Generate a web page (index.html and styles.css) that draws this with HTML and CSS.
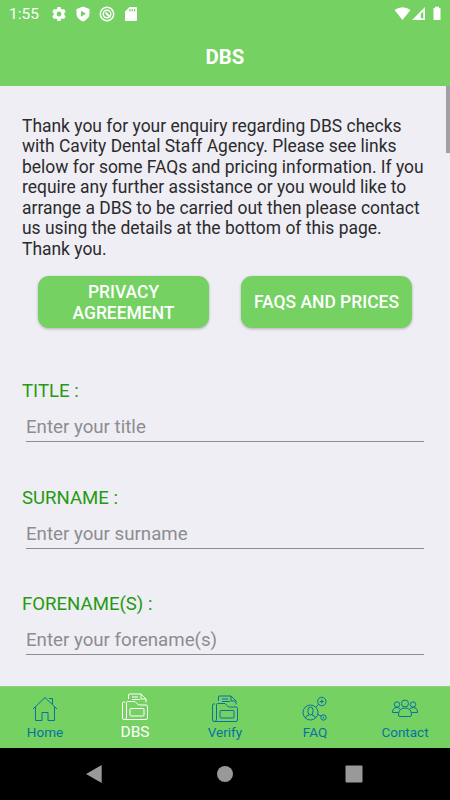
FILE: index.html
```html
<!DOCTYPE html>
<html lang="en">
<head>
<meta charset="utf-8">
<title>DBS</title>
<link rel="stylesheet" href="styles.css">
</head>
<body>
<svg class="defs" aria-hidden="true">
  <symbol id="folder" viewBox="0 0 28 28">
    <path d="M4 9H2.500Q1.500 9 1.500 10V25Q1.500 26.500 3 26.500H25Q26.500 26.500 26.500 25V13.500Q26.500 12 25 12H17.500L14 8.500H6.500Q5.500 8.500 5.500 9.500V24Q5.500 26 4 26.500"/>
    <path d="M7.500 6V2Q7.500 1 8.500 1H20L25 6V9.500M20 1V6H25M11 4H17M11 6.500H19"/>
    <rect x="9" y="15.500" width="14" height="7.500" rx="1"/>
  </symbol>
</svg>
<header class="top">
  <div class="status">
    <span class="time">1:55</span>
    <svg class="status-icon" viewBox="0 0 16 16"><path fill="#fff" fill-rule="evenodd" d="M6.400 1h3.200l.4 1.900 1.200.7 1.900-.6 1.600 2.700L13.300 7v2l1.400 1.300-1.600 2.700-1.900-.6-1.200.7-.4 1.900H6.400L6 13.100l-1.200-.7-1.900.6-1.600-2.700L2.700 9V7L1.300 5.700 2.900 3l1.900.6L6 2.900zM8 5.600a2.400 2.400 0 1 0 .01 0z"/></svg>
    <svg class="status-icon" viewBox="0 0 16 16"><path fill="#fff" fill-rule="evenodd" d="M8 .5 14.500 3v4.500c0 4-3 6.500-6.500 8-3.500-1.500-6.500-4-6.500-8V3zM6 4.700v6L11 7.700z"/></svg>
    <svg class="status-icon" viewBox="0 0 16 16"><g fill="none" stroke="#fff"><circle cx="8" cy="8" r="6.700" stroke-width="1.500"/><circle cx="8" cy="8" r="3.800" stroke-width="1.500"/><path d="m6.500 6.500 4.500 4.500" stroke-width="2"/></g></svg>
    <svg class="status-icon" viewBox="0 0 16 16"><path fill="#fff" fill-rule="evenodd" d="M6.500 1H13q1 0 1 1v12q0 1-1 1H3q-1 0-1-1V5.500zM6.300 3v2.500h1.200V3zm2.400 0v2.500h1.200V3zm2.300 0v2.500h1.200V3z"/></svg>
    <svg class="signals" viewBox="0 0 50 16"><g fill="#fff"><path d="M.5 4Q8.500-1.500 16.500 4L8.500 14z"/><path fill-rule="evenodd" d="M18 14 31 1v13zM26.800 12.300h2.500V5.500l-2.500 2.500z"/><path d="M39.500 2H41V.8h4V2h1.500v12h-7z"/></g></svg>
  </div>
  <h1>DBS</h1>
</header>
<main>
  <i class="scroll-thumb"></i>
  <p>Thank you for your enquiry regarding DBS checks<br>with Cavity Dental Staff Agency. Please see links<br>below for some FAQs and pricing information. If you<br>require any further assistance or you would like to<br>arrange a DBS to be carried out then please contact<br>us using the details at the bottom of this page.<br>Thank you.</p>
  <div class="buttons">
    <button>PRIVACY<br>AGREEMENT</button>
    <button>FAQS AND PRICES</button>
  </div>
  <label class="field"><span>TITLE :</span><input placeholder="Enter your title"></label>
  <label class="field"><span>SURNAME :</span><input placeholder="Enter your surname"></label>
  <label class="field"><span>FORENAME(S) :</span><input placeholder="Enter your forename(s)"></label>
</main>
<nav class="tabs">
  <a class="tab"><svg viewBox="0 0 28 28"><path d="M2 14 14 2.500l12 11.500M4.500 12v13.500H11V17.500h6v8h6.500V12M18 3.500h3.500V9"/></svg><span>Home</span></a>
  <a class="tab active"><svg><use href="#folder"/></svg><span>DBS</span></a>
  <a class="tab"><svg><use href="#folder"/></svg><span>Verify</span></a>
  <a class="tab"><svg viewBox="0 0 28 28"><circle cx="9.500" cy="17.500" r="7.500"/><circle cx="20.800" cy="6.500" r="4.200"/><circle cx="22.500" cy="22.500" r="2.700"/><path d="m15 12 3-3M17 19.500l3 1.500M20.800 4.500v4M18.800 6.500h4M22.500 21.500v2M7 15q0-3 2.500-3t2.500 3v2q0 3-2.500 3T7 17zM4.500 23q0-2 3.500-3M14.500 23q0-2-3.500-3"/></svg><span>FAQ</span></a>
  <a class="tab"><svg viewBox="0 0 28 28"><circle cx="14" cy="8.500" r="3.500"/><circle cx="6" cy="9.500" r="2.700"/><circle cx="22" cy="9.500" r="2.700"/><path d="M7.500 20q0-7 6.500-7t6.500 7q0 1.500-1.500 1.500H9q-1.500 0-1.500-1.500zM7.500 17.500H1.500q0-5 4.500-5 2 0 3 1.500M20.500 17.500h6q0-5-4.500-5-2 0-3 1.500"/></svg><span>Contact</span></a>
</nav>
<footer class="system">
  <svg viewBox="0 0 20 20"><path d="M2 10 17.700 1v18z"/></svg>
  <svg viewBox="0 0 20 20"><circle cx="10" cy="10" r="8"/></svg>
  <svg viewBox="0 0 20 20"><rect x="1.500" y="1.500" width="17" height="17" rx="1"/></svg>
</footer>
</body>
</html>
```
FILE: styles.css
```css
* { box-sizing: border-box; }
body {
  margin: 0;
  width: 450px;
  height: 800px;
  overflow: hidden;
  display: flex;
  flex-direction: column;
  background: #efeef4;
  font-family: Roboto, sans-serif;
}
.defs { display: none; }
.top { height: 86px; flex: none; background: #74d162; color: #fff; }
.status { height: 27px; display: flex; align-items: center; padding: 0 2px 0 9px; }
.time { width: 41.6px; font-size: 15.5px; line-height: 27px; padding-top: 1px; }
.status-icon { width: 16px; height: 16px; margin-right: 8.2px; }
.signals { width: 50px; height: 16px; margin-left: auto; margin-right: 4px; }
h1 { margin: 0; font-size: 20.4px; line-height: 60px; font-weight: 700; text-align: center; }
main { position: relative; height: 600px; flex: none; padding: 30px 0 0 22px; overflow: hidden; }
.scroll-thumb { position: absolute; top: 0; right: 0; width: 4.500px; height: 67px; background: #a09fa3; }
p { margin: 0; font-size: 17.45px; line-height: 20.45px; color: #2b2b2d; white-space: nowrap; }
.buttons { display: flex; gap: 32px; margin: 17px 0 48.95px 16px; }
button {
  width: 171px;
  height: 52px;
  padding: 1px 0 0;
  border: 0;
  border-radius: 11px;
  background: #74d162;
  color: #fff;
  font: 500 17.45px/20.5px Roboto, sans-serif;
  box-shadow: 0 1px 3px #0004;
}
.field { display: block; height: 106.6px; color: #259a12; font-size: 18.6px; }
.field span { display: block; line-height: 28px; }
input {
  display: block;
  width: 398px;
  height: 36px;
  margin: 1px 0 0 4px;
  padding: 9px 0 2px;
  border: 0;
  border-bottom: 1px solid #8d8c90;
  background: none;
  font: 18.7px Roboto, sans-serif;
}
input::placeholder { color: #8d8c90; opacity: 1; }
.tabs { height: 62px; flex: none; display: grid; grid-template-columns: repeat(5, 1fr); background: #74d162; border-top: 1px solid #8fcf85; }
.tab { display: flex; flex-direction: column; align-items: center; padding-top: 8px; color: #0873a0; font-size: 13.5px; line-height: 19px; }
.tab svg { width: 28px; height: 28px; fill: none; stroke: currentColor; stroke-width: 1; }
.active { padding-top: 6px; color: #fff; font-size: 15.5px; line-height: 22px; }
.system { height: 52px; flex: none; display: flex; align-items: center; justify-content: space-between; padding: 0 86px 0 84px; background: #000; }
.system svg { width: 20px; height: 20px; fill: #999; }
.system svg:nth-child(2) { margin-left: 2px; }
```
